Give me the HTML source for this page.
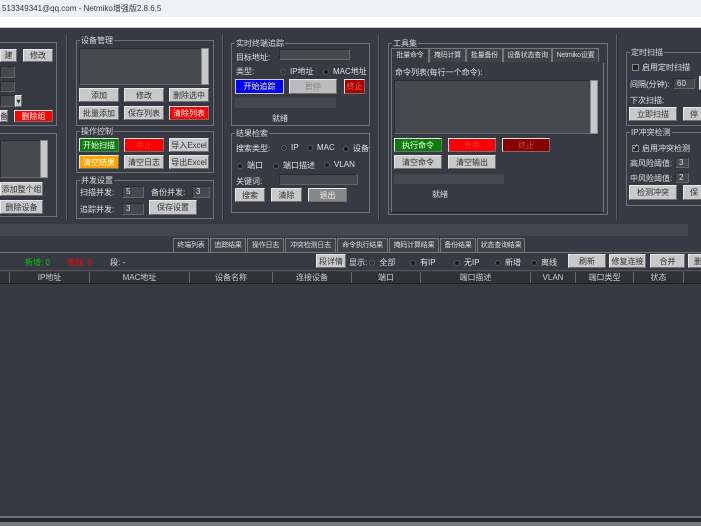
<!DOCTYPE html>
<html><head><meta charset="utf-8"><style>
*{box-sizing:border-box;margin:0;padding:0}
body{width:701px;height:526px;overflow:hidden;background:#373a43;font-family:"Liberation Sans","Noto Sans CJK SC",sans-serif;font-size:8px;color:#e0e0e0;position:relative}
.a{position:absolute;white-space:nowrap}
.b{position:absolute;background:#c9c9c9;color:#333;border:1px solid #e8e8e8;border-right-color:#707070;border-bottom-color:#707070;text-align:center;font-size:8px;display:flex;align-items:center;justify-content:center;white-space:nowrap}
.in{position:absolute;background:#45484f;border:1px solid #2a2c31;border-right-color:#666;border-bottom-color:#666;color:#ddd;font-size:8px;padding-left:3px;line-height:10px}
.g{position:absolute;border:1px solid #6e7178}
.g>span{position:absolute;top:-6px;left:3px;background:#373a43;padding:0 1px;color:#ddd;font-size:8px}
.sb{position:absolute;background:#c8c8c8;width:8px;border:1px solid #888}
.r{display:inline-block;width:6px;height:6px;border-radius:50%;background:#1c1c1c;border:1px solid #555;vertical-align:middle;margin-right:4px}
.r.on{background:#ddd;box-shadow:inset 0 0 0 1.5px #1c1c1c}
.vl{position:absolute;width:2px;background:#5a5d63;border-right:1px solid #2a2c31}
.tab{position:absolute;top:238px;height:14px;background:#3f424a;border:1px solid #777;border-bottom:none;color:#ddd;font-size:7px;text-align:center;line-height:13px;white-space:nowrap;overflow:hidden;letter-spacing:-0.2px}
.th{position:absolute;top:272px;height:11px;border-right:1px solid #666;background:#2f3239;text-align:center;line-height:11px;color:#ccc;font-size:8px}
</style></head><body>
<div class="a" style="left:0;top:0;width:701px;height:17px;background:#eef2f8;color:#333;font-size:8px;line-height:17px;padding-left:2px">513349341@qq.com - Netmiko增强版2.8.6.5</div>
<div class="a" style="left:0;top:17px;width:701px;height:11px;background:#fff;border-bottom:1px solid #ccc"></div>

<div class="g" style="left:-2px;top:42px;width:59px;height:84px"></div>
<div class="b" style="left:0;top:49px;width:17px;height:13px">建</div>
<div class="b" style="left:23px;top:49px;width:30px;height:13px">修改</div>
<div class="in" style="left:0;top:66px;width:15px;height:12px"></div>
<div class="in" style="left:0;top:81px;width:15px;height:11px"></div>
<div class="in" style="left:0;top:95px;width:15px;height:12px"></div>
<div class="b" style="left:15px;top:95px;width:7px;height:12px">▾</div>
<div class="b" style="left:0;top:110px;width:8px;height:12px">备</div>
<div class="b" style="left:14px;top:110px;width:39px;height:12px;background:#f00;color:#fff">删除组</div>
<div class="g" style="left:-2px;top:133px;width:59px;height:84px"></div>
<div class="in" style="left:0;top:140px;width:41px;height:38px"></div>
<div class="sb" style="left:40px;top:140px;height:38px"></div>
<div class="b" style="left:0;top:182px;width:43px;height:14px">添加整个组</div>
<div class="b" style="left:0;top:200px;width:43px;height:14px">删除设备</div>
<div class="vl" style="left:66px;top:34px;height:186px"></div>

<div class="g" style="left:76px;top:40px;width:138px;height:86px"><span>设备管理</span></div>
<div class="in" style="left:79px;top:48px;width:123px;height:37px"></div>
<div class="sb" style="left:201px;top:48px;height:37px"></div>
<div class="b" style="left:79px;top:88px;width:40px;height:14px">添加</div>
<div class="b" style="left:124px;top:88px;width:40px;height:14px">修改</div>
<div class="b" style="left:169px;top:88px;width:40px;height:14px">删除选中</div>
<div class="b" style="left:79px;top:106px;width:40px;height:14px">批量添加</div>
<div class="b" style="left:124px;top:106px;width:40px;height:14px">保存列表</div>
<div class="b" style="left:169px;top:106px;width:40px;height:14px;background:#f00;color:#fff">清除列表</div>
<div class="g" style="left:76px;top:131px;width:138px;height:42px"><span>操作控制</span></div>
<div class="b" style="left:79px;top:138px;width:40px;height:14px;background:#0a7d0a;color:#fff">开始扫描</div>
<div class="b" style="left:124px;top:138px;width:40px;height:14px;background:#f00;color:#d33">停止</div>
<div class="b" style="left:169px;top:138px;width:40px;height:14px">导入Excel</div>
<div class="b" style="left:79px;top:155px;width:40px;height:14px;background:#ffa500;color:#fff">清空结果</div>
<div class="b" style="left:124px;top:155px;width:40px;height:14px">清空日志</div>
<div class="b" style="left:169px;top:155px;width:40px;height:14px">导出Excel</div>
<div class="g" style="left:76px;top:180px;width:138px;height:39px"><span>并发设置</span></div>
<div class="a" style="left:80px;top:187px">扫描并发:</div>
<div class="in" style="left:122px;top:186px;width:22px;height:12px">5</div>
<div class="a" style="left:151px;top:187px">备份并发:</div>
<div class="in" style="left:192px;top:186px;width:18px;height:12px">3</div>
<div class="a" style="left:80px;top:204px">追踪并发:</div>
<div class="in" style="left:122px;top:203px;width:22px;height:12px">3</div>
<div class="b" style="left:149px;top:200px;width:48px;height:15px">保存设置</div>
<div class="vl" style="left:222px;top:34px;height:186px"></div>

<div class="g" style="left:231px;top:43px;width:139px;height:83px"><span>实时终端追踪</span></div>
<div class="a" style="left:236px;top:52px">目标地址:</div>
<div class="in" style="left:279px;top:49px;width:71px;height:11px"></div>
<div class="a" style="left:236px;top:66px">类型:</div>
<div class="a" style="left:280px;top:66px"><span class="r on"></span>IP地址</div>
<div class="a" style="left:323px;top:66px"><span class="r"></span>MAC地址</div>
<div class="b" style="left:235px;top:79px;width:49px;height:15px;background:#0000f0;color:#fff;border-color:#ccc">开始追踪</div>
<div class="b" style="left:289px;top:79px;width:48px;height:15px;background:#bbb;color:#888">暂停</div>
<div class="b" style="left:344px;top:79px;width:21px;height:15px;background:#a00;color:#e66">终止</div>
<div class="a" style="left:235px;top:98px;width:101px;height:10px;background:#45484f"></div>
<div class="a" style="left:272px;top:113px">就绪</div>
<div class="g" style="left:231px;top:133px;width:139px;height:80px"><span>结果检索</span></div>
<div class="a" style="left:236px;top:143px">搜索类型:</div>
<div class="a" style="left:281px;top:143px"><span class="r on"></span>IP</div>
<div class="a" style="left:307px;top:143px"><span class="r"></span>MAC</div>
<div class="a" style="left:343px;top:143px"><span class="r"></span>设备</div>
<div class="a" style="left:237px;top:160px"><span class="r"></span>端口</div>
<div class="a" style="left:273px;top:160px"><span class="r"></span>端口描述</div>
<div class="a" style="left:324px;top:160px"><span class="r"></span>VLAN</div>
<div class="a" style="left:236px;top:176px">关键词:</div>
<div class="in" style="left:279px;top:174px;width:79px;height:11px"></div>
<div class="b" style="left:235px;top:188px;width:30px;height:14px">搜索</div>
<div class="b" style="left:271px;top:188px;width:31px;height:14px">清除</div>
<div class="b" style="left:308px;top:188px;width:39px;height:14px;background:#888;color:#eee">退出</div>
<div class="vl" style="left:378px;top:34px;height:186px"></div>

<div class="g" style="left:388px;top:43px;width:220px;height:172px"><span>工具集</span></div>
<div class="tab" style="left:391px;top:48px;width:38px;height:15px;background:#373a43">批量命令</div>
<div class="tab" style="left:429px;top:48px;width:37px">掩码计算</div>
<div class="tab" style="left:466px;top:48px;width:37px">批量备份</div>
<div class="tab" style="left:503px;top:48px;width:49px">设备状态查询</div>
<div class="tab" style="left:552px;top:48px;width:47px">Netmiko设置</div>
<div class="a" style="left:391px;top:63px;width:213px;height:150px;border:1px solid #777;border-top:none;background:#373a43;border-bottom-color:#222"></div>
<div class="a" style="left:395px;top:67px">命令列表(每行一个命令):</div>
<div class="in" style="left:394px;top:80px;width:197px;height:54px"></div>
<div class="sb" style="left:590px;top:80px;height:54px"></div>
<div class="b" style="left:394px;top:138px;width:48px;height:14px;background:#0a7d0a;color:#fff">执行命令</div>
<div class="b" style="left:448px;top:138px;width:48px;height:14px;background:#f00;color:#d33">暂停</div>
<div class="b" style="left:502px;top:138px;width:48px;height:14px;background:#800;color:#c44">终止</div>
<div class="b" style="left:394px;top:155px;width:48px;height:14px">清空命令</div>
<div class="b" style="left:448px;top:155px;width:48px;height:14px">清空输出</div>
<div class="a" style="left:394px;top:174px;width:110px;height:10px;background:#45484f"></div>
<div class="a" style="left:432px;top:189px">就绪</div>
<div class="vl" style="left:616px;top:34px;height:186px"></div>

<div class="g" style="left:626px;top:52px;width:80px;height:74px"><span>定时扫描</span></div>
<div class="a" style="left:632px;top:62px"><span style="display:inline-block;width:7px;height:7px;background:#222;border:1px solid #888;vertical-align:middle;margin-right:3px"></span>启用定时扫描</div>
<div class="a" style="left:630px;top:79px">间隔(分钟):</div>
<div class="in" style="left:673px;top:78px;width:22px;height:11px">60</div>
<div class="b" style="left:699px;top:76px;width:4px;height:14px"></div>
<div class="a" style="left:630px;top:95px">下次扫描:</div>
<div class="b" style="left:629px;top:107px;width:48px;height:14px">立即扫描</div>
<div class="b" style="left:683px;top:107px;width:22px;height:14px">停</div>
<div class="g" style="left:626px;top:132px;width:80px;height:74px"><span>IP冲突检测</span></div>
<div class="a" style="left:632px;top:143px"><span style="display:inline-block;width:7px;height:7px;background:#222;border:1px solid #888;vertical-align:middle;margin-right:3px;font-size:6px;line-height:5px;color:#fff">✓</span>启用冲突检测</div>
<div class="a" style="left:630px;top:158px">高风险阈值:</div>
<div class="in" style="left:675px;top:157px;width:14px;height:11px">3</div>
<div class="a" style="left:630px;top:173px">中风险阈值:</div>
<div class="in" style="left:675px;top:172px;width:14px;height:11px">2</div>
<div class="b" style="left:629px;top:185px;width:48px;height:15px">检测冲突</div>
<div class="b" style="left:683px;top:185px;width:22px;height:15px">保</div>

<div class="a" style="left:0;top:224px;width:688px;height:12px;background:#42454d"></div>

<div class="tab" style="left:173px;width:36px;background:#373a43;height:15px">终端列表</div>
<div class="tab" style="left:210px;width:36px">追踪结果</div>
<div class="tab" style="left:247px;width:37px">操作日志</div>
<div class="tab" style="left:285px;width:51px">冲突检测日志</div>
<div class="tab" style="left:337px;width:51px">命令执行结果</div>
<div class="tab" style="left:389px;width:50px">掩码计算结果</div>
<div class="tab" style="left:440px;width:36px">备份结果</div>
<div class="tab" style="left:477px;width:48px">状态查询结果</div>
<div class="a" style="left:0;top:252px;width:701px;height:1px;background:#777"></div>
<div class="a" style="left:25px;top:257px;color:#0c0">新增: 0</div>
<div class="a" style="left:67px;top:257px;color:#f00">离线: 0</div>
<div class="a" style="left:110px;top:257px">段: -</div>
<div class="b" style="left:316px;top:254px;width:30px;height:14px">段详情</div>
<div class="a" style="left:349px;top:257px">显示: <span class="r on"></span>全部</div>
<div class="a" style="left:410px;top:257px"><span class="r"></span>有IP</div>
<div class="a" style="left:454px;top:257px"><span class="r"></span>无IP</div>
<div class="a" style="left:495px;top:257px"><span class="r"></span>新增</div>
<div class="a" style="left:531px;top:257px"><span class="r"></span>离线</div>
<div class="b" style="left:568px;top:254px;width:38px;height:14px">刷新</div>
<div class="b" style="left:609px;top:254px;width:37px;height:14px">修复连接</div>
<div class="b" style="left:650px;top:254px;width:35px;height:14px">合并</div>
<div class="b" style="left:688px;top:254px;width:20px;height:14px">删</div>
<div class="a" style="left:0;top:270px;width:701px;height:1px;background:#555"></div>
<div class="th" style="left:0;width:10px"></div>
<div class="th" style="left:10px;width:80px">IP地址</div>
<div class="th" style="left:90px;width:100px">MAC地址</div>
<div class="th" style="left:190px;width:83px">设备名称</div>
<div class="th" style="left:273px;width:79px">连接设备</div>
<div class="th" style="left:352px;width:69px">端口</div>
<div class="th" style="left:421px;width:110px">端口描述</div>
<div class="th" style="left:531px;width:45px">VLAN</div>
<div class="th" style="left:576px;width:58px">端口类型</div>
<div class="th" style="left:634px;width:50px">状态</div>
<div class="th" style="left:684px;width:20px"></div>
<div class="a" style="left:0;top:283px;width:701px;height:1px;background:#222"></div>

<div class="a" style="left:0;top:516px;width:701px;height:2px;background:#6a6d72"></div>
<div class="a" style="left:0;top:518px;width:701px;height:4px;background:#26282c"></div>
<div class="a" style="left:0;top:522px;width:701px;height:4px;background:#7a7c80"></div>
</body></html>
